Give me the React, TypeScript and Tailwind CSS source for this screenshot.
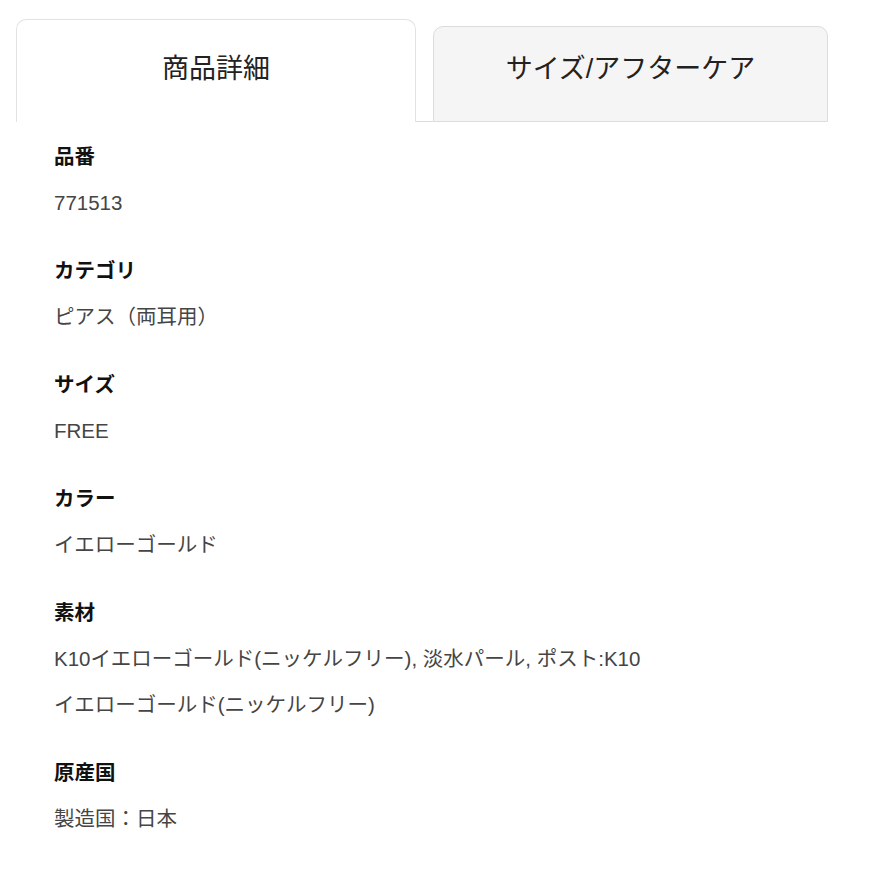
const font = {
  fontFamily: '"Liberation Sans", "Noto Sans CJK JP", sans-serif',
};

const rows: { label: string; lines: string[] }[] = [
  { label: "品番", lines: ["771513"] },
  { label: "カテゴリ", lines: ["ピアス（両耳用）"] },
  { label: "サイズ", lines: ["FREE"] },
  { label: "カラー", lines: ["イエローゴールド"] },
  {
    label: "素材",
    lines: [
      "K10イエローゴールド(ニッケルフリー), 淡水パール, ポスト:K10",
      "イエローゴールド(ニッケルフリー)",
    ],
  },
  { label: "原産国", lines: ["製造国：日本"] },
];

export default function App() {
  return (
    <div className="min-h-[873px] w-[873px] bg-white" style={font}>
      {/* tabs */}
      <div className="flex items-end pl-[16px] pt-[19px]">
        <div className="flex h-[103px] w-[400px] justify-center rounded-t-[10px] border-x border-t border-[#e2e2e2] bg-white pt-[33px]">
          <span className="text-[27px] leading-[32px] text-[#222]">商品詳細</span>
        </div>
        <div className="h-px w-[17px] bg-[#dcdcdc]" />
        <div className="flex h-[96px] w-[395px] justify-center rounded-t-[10px] border border-[#dcdcdc] bg-[#f5f5f5] pt-[26px]">
          <span className="text-[27px] leading-[32px] text-[#222]">サイズ/アフターケア</span>
        </div>
      </div>

      {/* details */}
      <div className="flex flex-col gap-[22px] pl-[54px] pt-[12px]">
        {rows.map((row) => (
          <div key={row.label} className="flex flex-col">
            <div className="text-[20.5px] font-bold leading-[46px] text-[#111]">{row.label}</div>
            {row.lines.map((line) => (
              <div key={line} className="text-[20.5px] leading-[46px] text-[#454545]">
                {line}
              </div>
            ))}
          </div>
        ))}
      </div>
    </div>
  );
}
